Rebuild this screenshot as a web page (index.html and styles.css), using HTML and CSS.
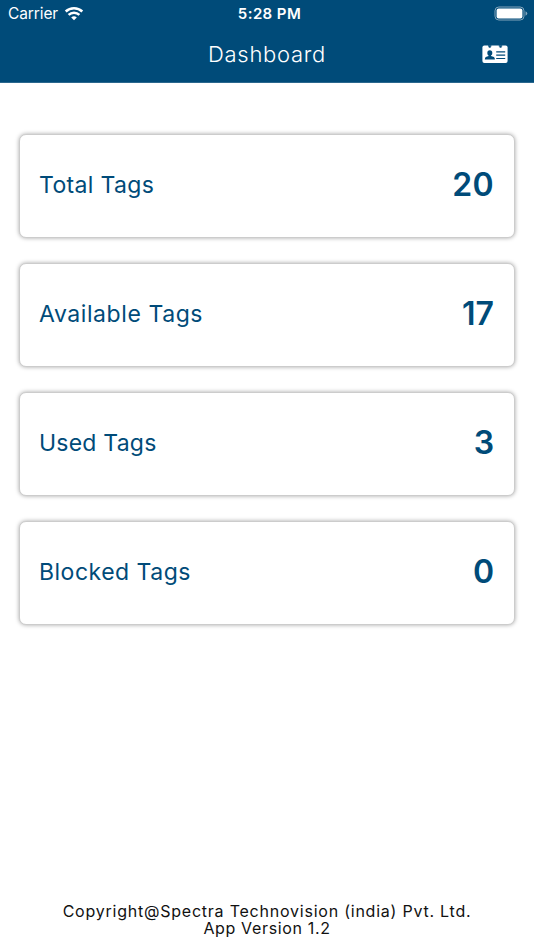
FILE: index.html
```html
<!DOCTYPE html>
<html lang="en">
<head>
<meta charset="utf-8">
<title>Dashboard</title>
<link rel="stylesheet" href="styles.css">
</head>
<body>
<header class="top">
  <div class="status">
    <div class="carrier"><span class="carrier-name">Carrier</span>
      <svg class="wifi" width="20" height="15" viewBox="0 0 20 15">
        <g fill="none" stroke="#fff" stroke-width="2.5">
          <path d="M1.7 5.5a12 12 0 0 1 16.6 0"/>
          <path d="M4.6 8.9a7.8 7.8 0 0 1 10.8 0"/>
        </g>
        <path fill="#fff" d="M10 14.3 7.2 11.5a4.2 4.2 0 0 1 5.6 0z"/>
      </svg>
    </div>
    <div class="time">5:28 PM</div>
    <svg class="battery" width="34" height="16" viewBox="0 0 34 16">
      <rect x="1" y="1" width="29" height="13" rx="3.8" fill="none" stroke="#82a5bc"/>
      <rect x="2.6" y="2.6" width="25.8" height="9.8" rx="2" fill="#fff"/>
      <path d="M31.5 5.2q1.8.8 1.8 2.3t-1.8 2.3z" fill="#82a5bc"/>
    </svg>
  </div>
  <div class="nav">
    <h1 class="title">Dashboard</h1>
    <svg class="card-icon" width="26" height="19" viewBox="0 0 26 19">
      <rect x=".4" y=".5" width="25.2" height="17.4" rx="2" fill="#fff"/>
      <g fill="#004b79">
        <path d="M6 .3h3.400v1.200h-.7v1.300H6.800V1.500H6zM16.800 .3h3.400v1.200h-.7v1.300h-1.900V1.500h-.8z"/>
        <ellipse cx="7.8" cy="8" rx="2.5" ry="2.7"/>
        <path d="M6.6 9.3h2.400v1.600l2.900 1.100q1 .5 1 2.500H2.800q0-2 1-2.500l2.800-1.100z"/>
      </g>
      <path fill="none" stroke="#004b79" stroke-width="1.2" d="M14.2 6.900h9M14.2 10.200h9M14.2 13.500h9"/>
    </svg>
  </div>
</header>
<main class="cards">
  <section class="card"><span class="label total">Total Tags</span><span class="value twenty">20</span></section>
  <section class="card"><span class="label available">Available Tags</span><span class="value">17</span></section>
  <section class="card"><span class="label used">Used Tags</span><span class="value">3</span></section>
  <section class="card"><span class="label blocked">Blocked Tags</span><span class="value">0</span></section>
</main>
<footer class="footer">
  <div class="copyright">Copyright@Spectra Technovision (india) Pvt. Ltd.</div>
  <div class="version">App Version 1.2</div>
</footer>
</body>
</html>
```
FILE: styles.css
```css
* { box-sizing: border-box; }
body {
  margin: 0;
  height: 950px;
  display: flex;
  flex-direction: column;
  background: #fff;
  font-family: Inter, "Liberation Sans", sans-serif;
  overflow: hidden;
}
.top {
  height: 83px;
  flex: none;
  background: #004b79;
  border-bottom: 1px solid #2a678e;
  color: #fff;
}
.status {
  height: 28px;
  display: grid;
  grid-template-columns: 1fr auto 1fr;
  align-items: center;
  padding: 0 6px 1px 8px;
}
.carrier { display: flex; align-items: center; gap: 6px; font-size: 15.5px; }
.carrier-name { letter-spacing: -0.1px; }
.wifi { margin-top: -1px; }
.time { font-size: 15px; font-weight: 600; letter-spacing: 0.4px; margin-left: 3px; }
.battery { justify-self: end; }
.nav {
  height: 52px;
  display: grid;
  grid-template-columns: 1fr auto 1fr;
  align-items: center;
  padding: 0 26px;
}
.title { grid-column: 2; margin: 0; font-size: 22px; font-weight: 350; letter-spacing: 0.7px; }
.card-icon { justify-self: end; }
.cards { padding: 51px 19px 0; display: grid; gap: 25px; }
.card {
  height: 104px;
  display: flex;
  align-items: center;
  justify-content: space-between;
  padding: 0 20px 2px 19px;
  border: 1px solid #ccc;
  border-radius: 7px;
  background: #fff;
  box-shadow: 0 0 4px rgba(0, 0, 0, 0.35);
  color: #004b79;
}
.label { font-size: 23px; line-height: 28px; font-weight: 400; }
.total { letter-spacing: 0.35px; }
.available { letter-spacing: 0.58px; }
.used { letter-spacing: 0.22px; }
.blocked { letter-spacing: 0.5px; }
.value { font-size: 32px; line-height: 38px; font-weight: 600; }
.twenty { letter-spacing: 0.4px; }
.footer {
  margin-top: auto;
  padding-bottom: 13px;
  text-align: center;
  font-size: 16px;
  line-height: 17px;
  color: #111;
}
.copyright { letter-spacing: 0.77px; }
.version { letter-spacing: 0.65px; }
```
